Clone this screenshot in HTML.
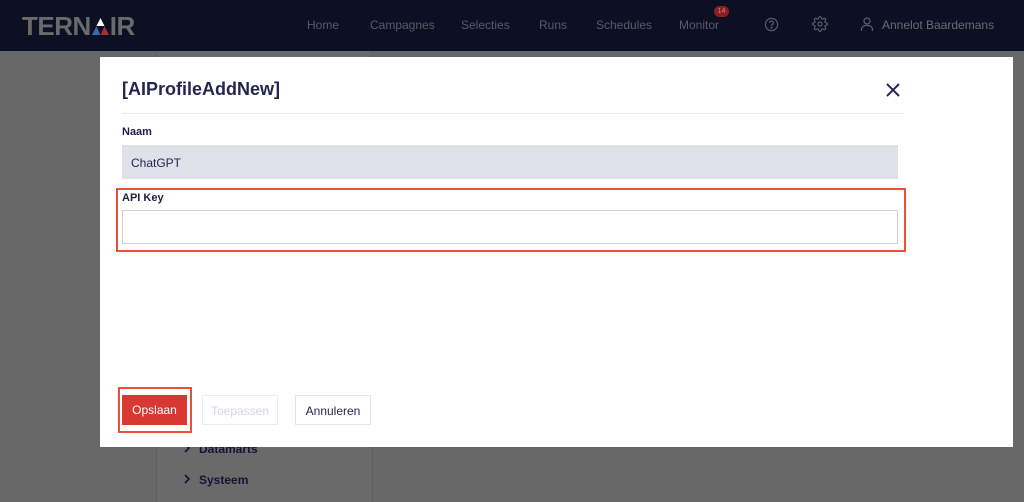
<!DOCTYPE html>
<html><head><style>
*{margin:0;padding:0;box-sizing:border-box}
body{width:1024px;height:502px;overflow:hidden;background:#686868;font-family:"Liberation Sans",sans-serif;position:relative}
.nav{position:absolute;left:0;top:0;width:1024px;height:51px;background:#0d0f23}
.logo{position:absolute;left:22px;top:11px;font-size:26px;font-weight:bold;color:#6a6a6a;letter-spacing:-0.5px}
.nl{position:absolute;top:18px;font-size:12px;color:#585b6b}
.side{position:absolute;left:156px;top:51px;width:217px;height:451px;background:#6a6a6a;border-left:1px solid #5f5f5f;border-right:1px solid #5f5f5f}
.si{position:absolute;left:26px;font-size:12px;font-weight:bold;color:#131530}
.modal{position:absolute;left:100px;top:57px;width:913px;height:390px;background:#fff}
.t{position:absolute;left:22px;top:22px;font-size:18px;font-weight:bold;color:#23264f}
.hr{position:absolute;left:22px;top:56px;width:782px;height:1px;background:#ececf0}
.lbl{position:absolute;left:22px;font-size:11px;font-weight:bold;color:#1d2046}
.in{position:absolute;left:22px;width:776px;height:34px}
.btn{position:absolute;top:338px;height:30px;font-size:12px;text-align:center;line-height:30px}
</style></head><body>
<div class="nav">
<div class="logo">TERN<svg width="21" height="19" viewBox="0 0 21 19" style="vertical-align:-1px;margin:0 -1px"><polygon points="10.5,1 14.5,9 6.5,9" fill="#fff"/><polygon points="6.5,9 10.5,18 2,18" fill="#3f6aa8"/><polygon points="14.5,9 19,18 10.5,18" fill="#a83030"/><polygon points="6.5,9 14.5,9 10.5,18" fill="#0d0f23"/></svg>IR</div>
<div class="nl" style="left:307px">Home</div>
<div class="nl" style="left:370px">Campagnes</div>
<div class="nl" style="left:461px">Selecties</div>
<div class="nl" style="left:539px">Runs</div>
<div class="nl" style="left:596px">Schedules</div>
<div class="nl" style="left:679px">Monitor</div>
<div style="position:absolute;left:714px;top:6px;width:15px;height:11px;border-radius:6px;background:#8a2020;color:#d08080;font-size:7px;text-align:center;line-height:11px">14</div>
<svg style="position:absolute;left:764px;top:17px" width="15" height="15" viewBox="0 0 16 16" fill="none" stroke="#585b6b" stroke-width="1.3"><circle cx="8" cy="8" r="6.5"/><path d="M6 6.3a2 2 0 1 1 2.8 1.8c-.6.3-.8.7-.8 1.3"/><circle cx="8" cy="11.6" r=".5" fill="#585b6b"/></svg>
<svg style="position:absolute;left:812px;top:16px" width="16" height="16" viewBox="0 0 24 24" fill="none" stroke="#585b6b" stroke-width="1.8"><circle cx="12" cy="12" r="3"/><path d="M19.4 15a1.7 1.7 0 0 0 .3 1.8l.1.1a2 2 0 1 1-2.8 2.8l-.1-.1a1.7 1.7 0 0 0-1.8-.3 1.7 1.7 0 0 0-1 1.5V21a2 2 0 1 1-4 0v-.1a1.7 1.7 0 0 0-1.1-1.5 1.7 1.7 0 0 0-1.8.3l-.1.1a2 2 0 1 1-2.8-2.8l.1-.1a1.7 1.7 0 0 0 .3-1.8 1.7 1.7 0 0 0-1.5-1H3a2 2 0 1 1 0-4h.1a1.7 1.7 0 0 0 1.5-1.1 1.7 1.7 0 0 0-.3-1.8l-.1-.1a2 2 0 1 1 2.8-2.8l.1.1a1.7 1.7 0 0 0 1.8.3H9a1.7 1.7 0 0 0 1-1.5V3a2 2 0 1 1 4 0v.1a1.7 1.7 0 0 0 1 1.5 1.7 1.7 0 0 0 1.8-.3l.1-.1a2 2 0 1 1 2.8 2.8l-.1.1a1.7 1.7 0 0 0-.3 1.8V9a1.7 1.7 0 0 0 1.5 1H21a2 2 0 1 1 0 4h-.1a1.7 1.7 0 0 0-1.5 1z"/></svg>
<svg style="position:absolute;left:860px;top:16px" width="14" height="16" viewBox="0 0 14 16" fill="none" stroke="#585b6b" stroke-width="1.3"><circle cx="7" cy="5" r="3"/><path d="M1.5 15v-1.5a4 4 0 0 1 4-4h3a4 4 0 0 1 4 4V15"/></svg>
<div class="nl" style="left:882px;color:#686b7a">Annelot Baardemans</div>
</div>
<div class="side">
<div class="si" style="top:391px"><svg width="8" height="10" viewBox="0 0 8 10" style="margin-right:8px" fill="none" stroke="#131530" stroke-width="1.6"><path d="M2 1l4 4-4 4"/></svg>Datamarts</div>
<div class="si" style="top:422px"><svg width="8" height="10" viewBox="0 0 8 10" style="margin-right:8px" fill="none" stroke="#131530" stroke-width="1.6"><path d="M2 1l4 4-4 4"/></svg>Systeem</div>
</div>
<div class="modal">
<div class="t">[AIProfileAddNew]</div>
<svg style="position:absolute;left:786px;top:26px" width="14" height="14" viewBox="0 0 14 14" stroke="#23264f" stroke-width="2"><path d="M1 1L13 13M13 1L1 13"/></svg>
<div class="hr"></div>
<div class="lbl" style="top:69px">Naam</div>
<div class="in" style="top:88px;background:#dfe0e8;font-size:12px;color:#23264f;padding:11px 9px">ChatGPT</div>
<div style="position:absolute;left:16px;top:131px;width:790px;height:64px;border:2px solid #e8503a"></div>
<div class="lbl" style="top:135px">API Key</div>
<div class="in" style="top:153px;border:1px solid #cfd0d8;background:#fff"></div>
<div style="position:absolute;left:18px;top:330px;width:74px;height:46px;border:2px solid #e8503a"></div>
<div class="btn" style="left:22px;width:65px;background:#d93832;color:#fff">Opslaan</div>
<div class="btn" style="left:102px;width:76px;border:1px solid #ececf0;color:#d6d7df">Toepassen</div>
<div class="btn" style="left:195px;width:76px;border:1px solid #e4e5ea;color:#23264f">Annuleren</div>
</div>
</body></html>
